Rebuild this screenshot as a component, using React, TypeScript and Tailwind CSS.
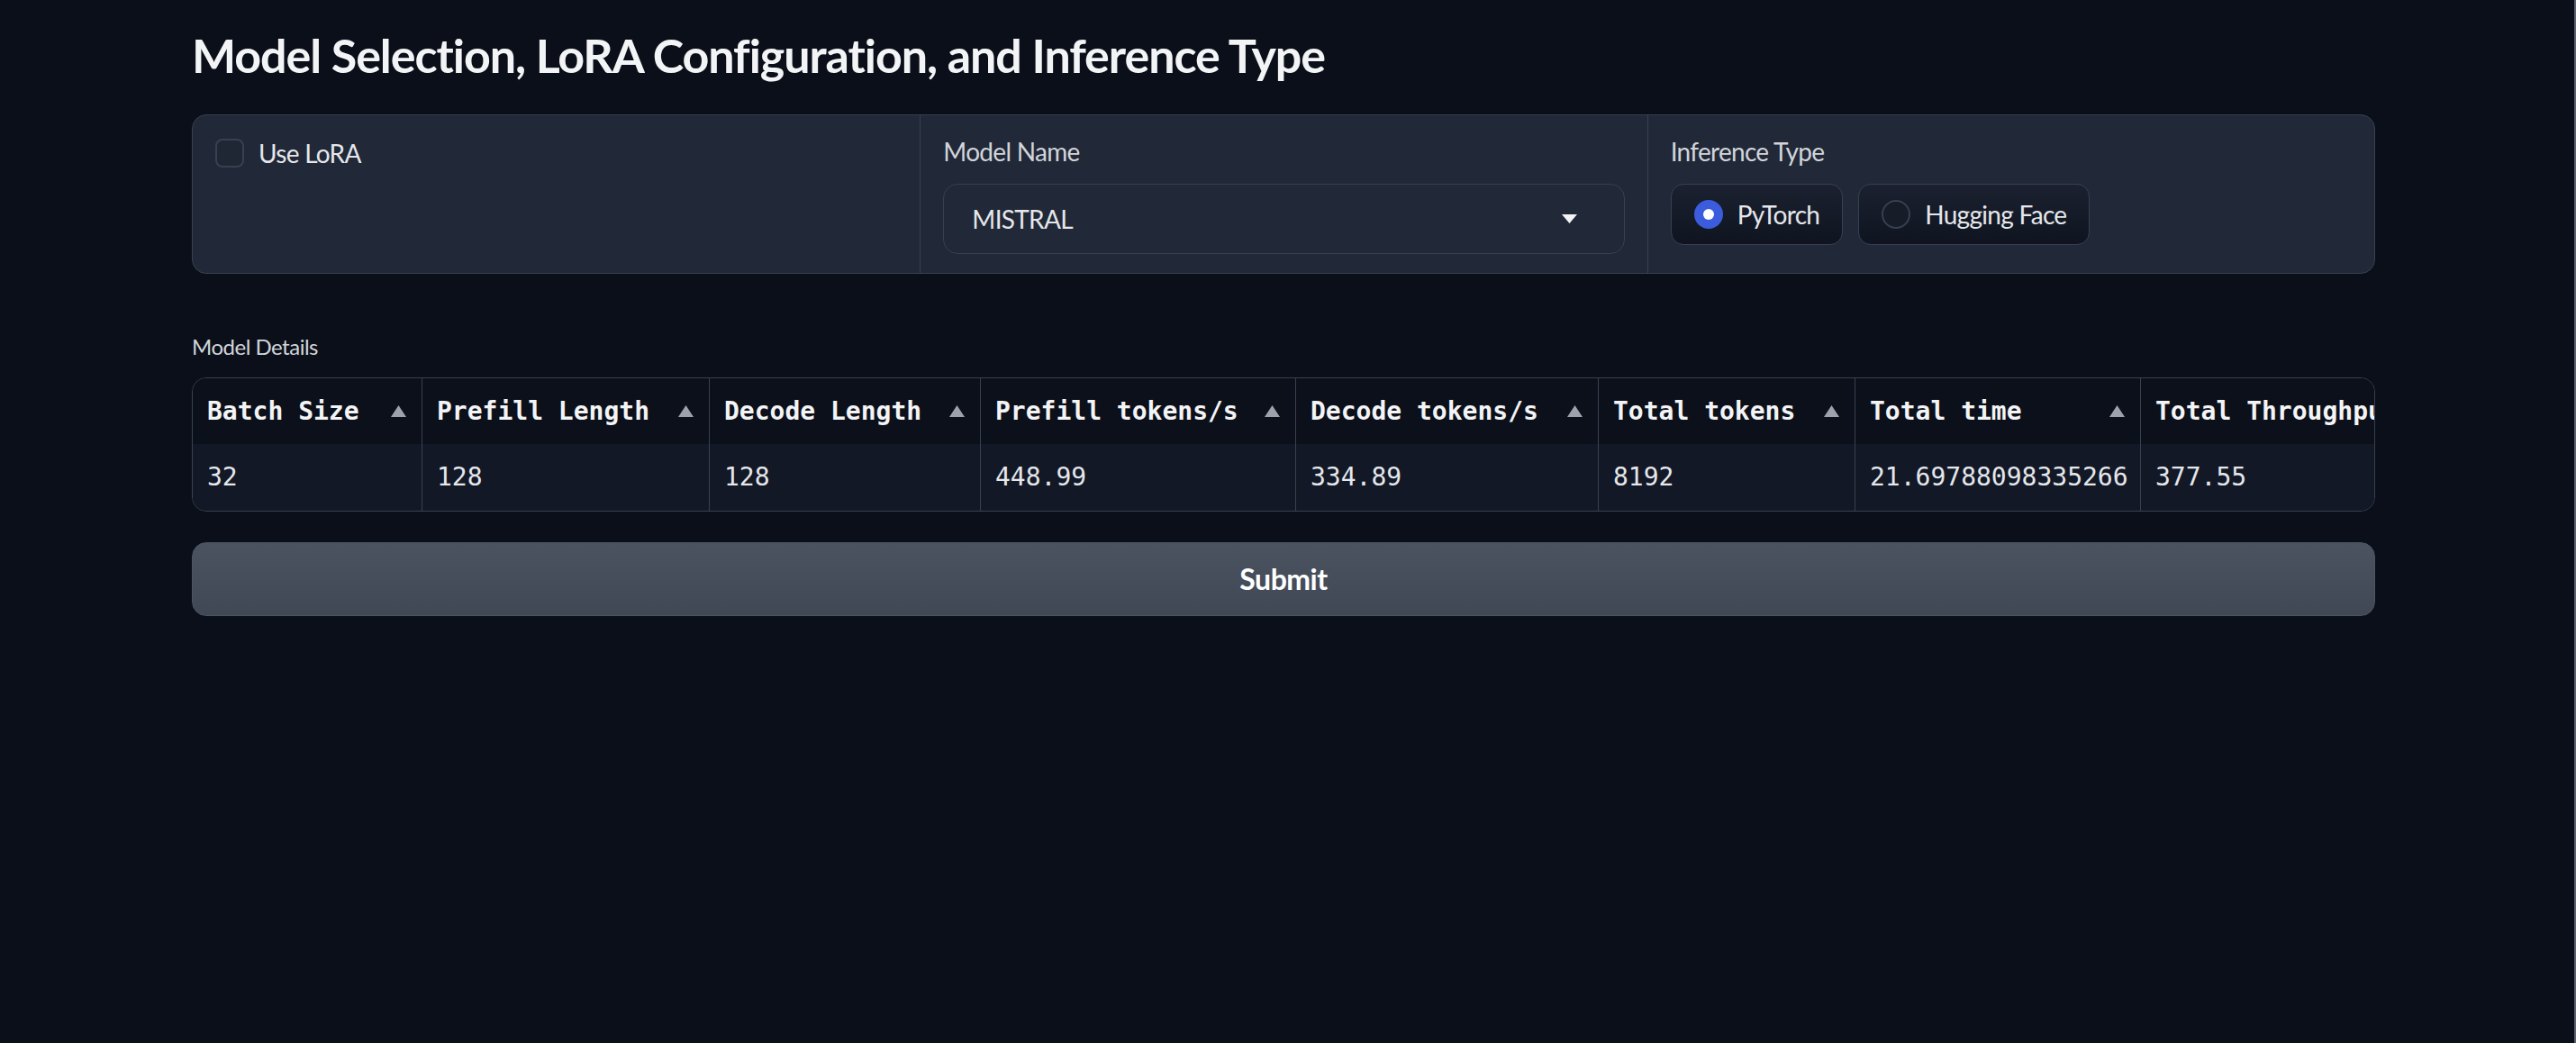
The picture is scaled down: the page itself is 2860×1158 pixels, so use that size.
import React from "react";

const sans = "font-['Lato','Noto_Sans',sans-serif]";
const mono = "font-['DejaVu_Sans_Mono','Liberation_Mono',monospace]";

type Col = { name: string; value: string; width: number; arrow: boolean };

const cols: Col[] = [
  { name: "Batch Size", value: "32", width: 254, arrow: true },
  { name: "Prefill Length", value: "128", width: 319, arrow: true },
  { name: "Decode Length", value: "128", width: 301, arrow: true },
  { name: "Prefill tokens/s", value: "448.99", width: 350, arrow: true },
  { name: "Decode tokens/s", value: "334.89", width: 336, arrow: true },
  { name: "Total tokens", value: "8192", width: 285, arrow: true },
  { name: "Total time", value: "21.69788098335266", width: 317, arrow: true },
  { name: "Total Throughput", value: "377.55", width: 360, arrow: true },
];

function SortArrow() {
  return (
    <svg width="17" height="13" viewBox="0 0 17 13" className="shrink-0">
      <path d="M8.5 0 L17 13 L0 13 Z" fill="#9ca3af" />
    </svg>
  );
}

export default function App() {
  return (
    <div className={`flex min-h-[1158px] w-full bg-[#0b0f19] ${sans}`}>
      <div className="flex-1">
        <div className="mx-auto w-[2424px] pt-[31px]">
          <h2 className="text-[52px] font-bold leading-[60px] tracking-[-1.05px] text-[#f3f4f6]">
            Model Selection, LoRA Configuration, and Inference Type
          </h2>

          <div className="mt-[36px] grid grid-cols-3 rounded-[16px] border border-[#374151] bg-[#212837]">
            <div className="px-[25px] pt-[26px] pb-[21px]">
              <label className="flex h-[32px] items-center gap-[16px]">
                <span className="h-[32px] w-[32px] rounded-[8px] border-2 border-[#374151] bg-[#1f2634]" />
                <span className="text-[28px] leading-[32px] tracking-[-0.7px] text-[#e5e7eb]">Use LoRA</span>
              </label>
            </div>

            <div className="border-l border-[#374151] px-[25px] pt-[24px] pb-[21px]">
              <div className="text-[28px] leading-[32px] tracking-[-0.7px] text-[#d1d5db]">Model Name</div>
              <div className="mt-[20px] flex h-[78px] items-center justify-between rounded-[16px] border border-[#374151] bg-[#212837] pl-[31px] pr-[52px]">
                <span className="text-[28px] leading-[32px] tracking-[-0.7px] text-[#e5e7eb]">MISTRAL</span>
                <svg width="17" height="10" viewBox="0 0 17 10">
                  <path d="M0 0 L17 0 L8.5 10 Z" fill="#f3f4f6" />
                </svg>
              </div>
            </div>

            <div className="border-l border-[#374151] px-[25px] pt-[24px] pb-[21px]">
              <div className="text-[28px] leading-[32px] tracking-[-0.7px] text-[#d1d5db]">Inference Type</div>
              <div className="mt-[20px] flex gap-[17px]">
                <div className="flex h-[68px] items-center gap-[16px] rounded-[14px] border border-[#374151] bg-gradient-to-t from-[#0f1420] to-[#1b2130] px-[25px]">
                  <span className="flex h-[32px] w-[32px] items-center justify-center rounded-full bg-[#3b5ddd]">
                    <span className="h-[12px] w-[12px] rounded-full bg-white" />
                  </span>
                  <span className="text-[28px] leading-[32px] tracking-[-0.7px] text-[#e5e7eb]">PyTorch</span>
                </div>
                <div className="flex h-[68px] items-center gap-[16px] rounded-[14px] border border-[#374151] bg-gradient-to-t from-[#0f1420] to-[#1b2130] px-[25px]">
                  <span className="h-[32px] w-[32px] rounded-full border-2 border-[#374151] bg-[#161c28]" />
                  <span className="text-[28px] leading-[32px] tracking-[-0.7px] text-[#e5e7eb]">Hugging Face</span>
                </div>
              </div>
            </div>
          </div>

          <div className="mt-[67px] text-[24px] leading-[28px] tracking-[-0.5px] text-[#d1d5db]">Model Details</div>

          <div className="mt-[20px] overflow-hidden rounded-[16px] border border-[#374151]">
            <div className="flex">
              {cols.map((c, i) => (
                <div
                  key={c.name}
                  className={`shrink-0 ${i > 0 ? "border-l border-[#374151]" : ""}`}
                  style={{ width: c.width }}
                >
                  <div className={`flex h-[73px] items-center justify-between bg-[#0c101a] pl-[16px] pr-[17px] ${mono}`}>
                    <span className="whitespace-nowrap text-[28px] font-bold text-[#f3f4f6]">{c.name}</span>
                    {c.arrow && <SortArrow />}
                  </div>
                  <div className={`flex h-[74px] items-center bg-[#121826] pl-[16px] ${mono}`}>
                    <span className="whitespace-nowrap text-[28px] text-[#e5e7eb]">{c.value}</span>
                  </div>
                </div>
              ))}
            </div>
          </div>

          <button className="mt-[34px] flex h-[82px] w-full items-center justify-center rounded-[16px] border border-[#4b5563] bg-gradient-to-b from-[#4b5260] to-[#414855] text-[32px] font-bold tracking-[-0.5px] text-white">
            Submit
          </button>
        </div>
      </div>
      <div className="w-[10px] shrink-0 border-r-2 border-[#5b6270]" />
    </div>
  );
}
